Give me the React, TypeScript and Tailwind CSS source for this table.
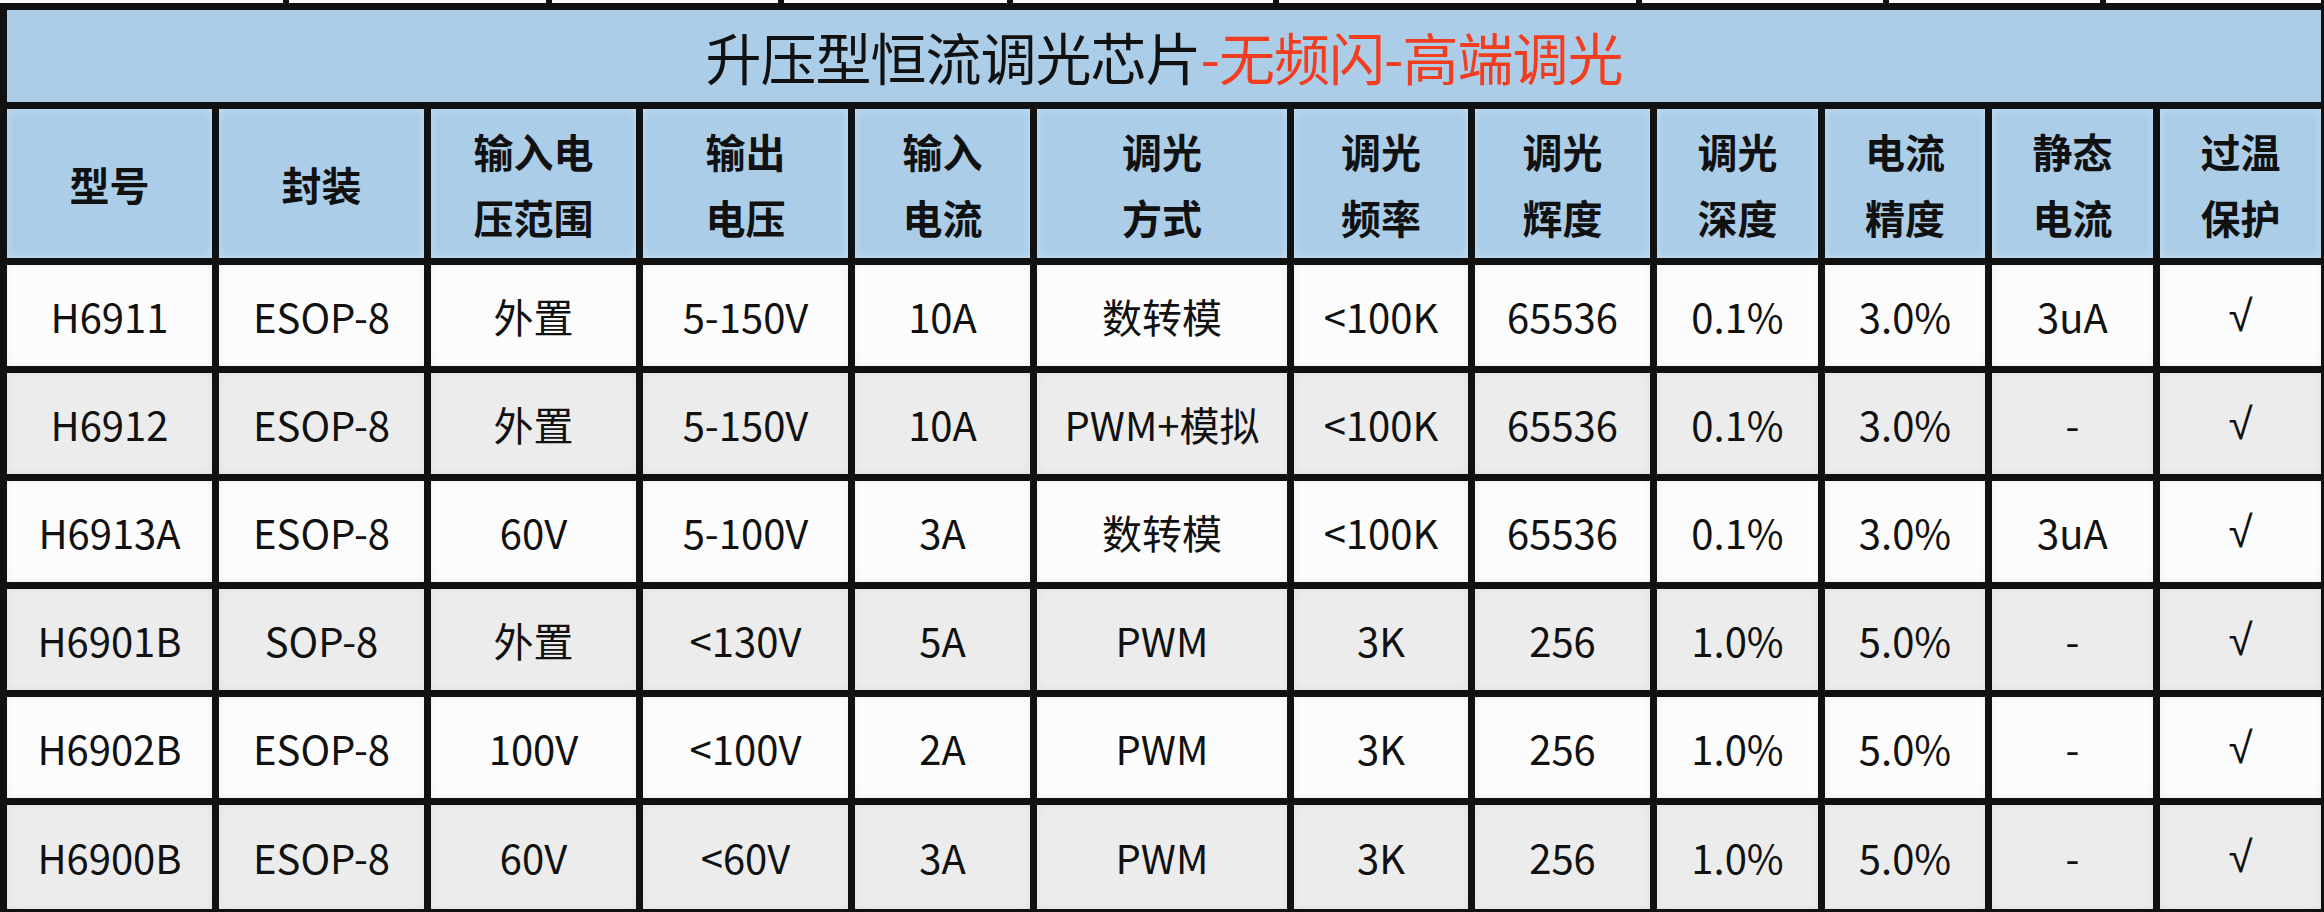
import React from 'react';

type Row = string[];

const headers: string[][] = [
  ['型号'],
  ['封装'],
  ['输入电', '压范围'],
  ['输出', '电压'],
  ['输入', '电流'],
  ['调光', '方式'],
  ['调光', '频率'],
  ['调光', '辉度'],
  ['调光', '深度'],
  ['电流', '精度'],
  ['静态', '电流'],
  ['过温', '保护'],
];

const rows: Row[] = [
  ['H6911', 'ESOP-8', '外置', '5-150V', '10A', '数转模', '<100K', '65536', '0.1%', '3.0%', '3uA', '√'],
  ['H6912', 'ESOP-8', '外置', '5-150V', '10A', 'PWM+模拟', '<100K', '65536', '0.1%', '3.0%', '-', '√'],
  ['H6913A', 'ESOP-8', '60V', '5-100V', '3A', '数转模', '<100K', '65536', '0.1%', '3.0%', '3uA', '√'],
  ['H6901B', 'SOP-8', '外置', '<130V', '5A', 'PWM', '3K', '256', '1.0%', '5.0%', '-', '√'],
  ['H6902B', 'ESOP-8', '100V', '<100V', '2A', 'PWM', '3K', '256', '1.0%', '5.0%', '-', '√'],
  ['H6900B', 'ESOP-8', '60V', '<60V', '3A', 'PWM', '3K', '256', '1.0%', '5.0%', '-', '√'],
];

// widths of the white cells of the row cut off above the title
const topStrip = [283, 257, 226, 223, 260, 357, 241, 211, 215];

const App: React.FC = () => {
  return (
    <div
      className="w-[2324px] h-[912px] overflow-hidden bg-[#111111] text-[#111111]"
      style={{ fontFamily: '"Noto Sans CJK SC", "Noto Sans", sans-serif' }}
    >
      {/* Cut-off row above */}
      <div className="flex gap-[6px] h-[3px]">
        {topStrip.map((w, i) => (
          <div key={i} className="h-full bg-[#fafafa] shrink-0" style={{ width: w }} />
        ))}
      </div>

      <div className="grid grid-cols-[205px_205px_205px_205px_175px_250px_174px_175px_161px_160px_161px_161px] grid-rows-[92px_149px_101px_101px_101px_101px_101px_104px] gap-[7px] pt-[7px] px-[7px]">
        {/* Title */}
        <div className="col-span-12 bg-[#abcde8] flex items-center justify-center text-[56px] leading-none tracking-[-1px]">
          <span>升压型恒流调光芯片</span>
          <span className="text-[#f23d1e]">-无频闪-高端调光</span>
        </div>

        {/* Header */}
        {headers.map((h, i) => (
          <div
            key={i}
            className="bg-[#abcde8] flex flex-col items-center justify-center text-[40px] font-bold leading-[66px] shadow-[inset_0_0_10px_rgba(255,255,255,0.35)]"
          >
            {h.map((line, j) => (
              <span key={j}>{line}</span>
            ))}
          </div>
        ))}

        {/* Data */}
        {rows.map((row, r) =>
          row.map((cell, c) => (
            <div
              key={`${r}-${c}`}
              className={`flex items-center justify-center text-[40px] leading-none shadow-[inset_0_0_8px_rgba(0,0,0,0.05)] ${
                r % 2 === 0 ? 'bg-[#fcfcfc]' : 'bg-[#ececec]'
              }`}
            >
              {cell === '√' ? (
                <span className="font-['Liberation_Sans',sans-serif] text-[44px]">√</span>
              ) : (
                cell
              )}
            </div>
          ))
        )}
      </div>
    </div>
  );
};

export default App;
